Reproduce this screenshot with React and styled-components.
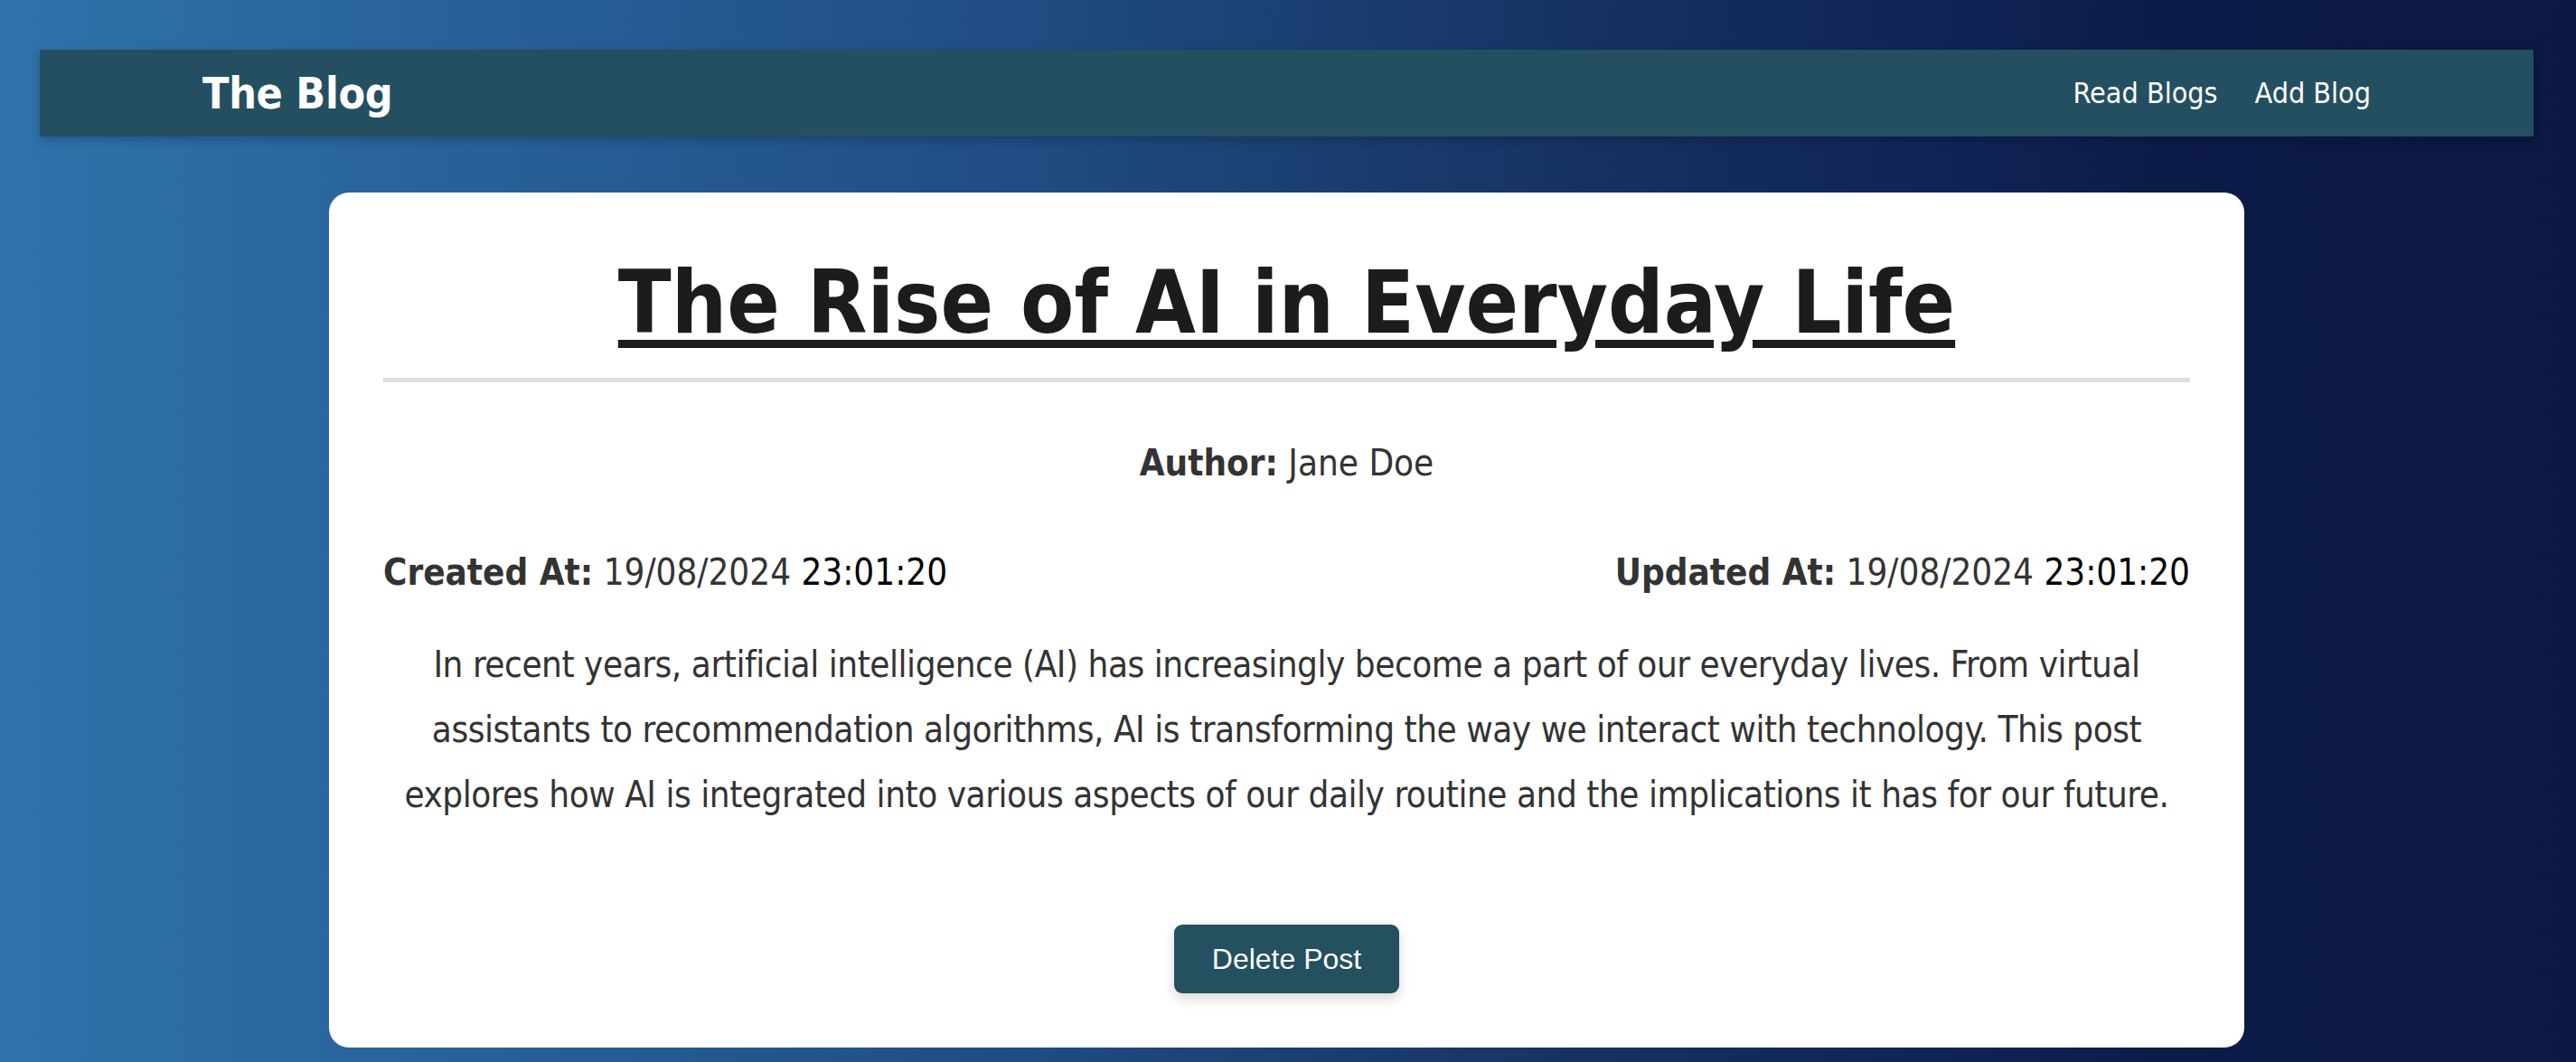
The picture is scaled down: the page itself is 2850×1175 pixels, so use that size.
import React from "react";
import styled, { createGlobalStyle } from "styled-components";

const GlobalStyle = createGlobalStyle`
    html, body {
        margin: 0;
        padding: 0;
    }
    body {
        font-family: "DejaVu Sans Condensed", "DejaVu Sans", Verdana, sans-serif;
        font-stretch: condensed;
        background: linear-gradient(to right, #2f72ac 0%, #1f4c82 40%, #16305f 63%, #0f2457 75%, #0c1b47 85%, #0b1842 100%);
        min-height: 100vh;
    }
`

const Page = styled.div `
    min-height: 1175px;
    padding: 55px 47px 0 44px;
    box-sizing: border-box;
`

const Navbar = styled.nav `
    display: flex;
    align-items: center;
    justify-content: space-between;
    height: 96px;
    padding: 0 180px;
    background-color: #244f61;
    box-shadow: 0 4px 10px rgba(0, 0, 0, 0.2);
`

const Brand = styled.h1 `
    margin: 0;
    color: white;
    font-size: 48px;
    font-weight: bold;
    letter-spacing: -0.3px;
`

const NavLinks = styled.div `
    display: flex;
    gap: 41px;
`

const NavLink = styled.a `
    color: white;
    font-size: 32px;
    text-decoration: none;
    cursor: pointer;
`

const Card = styled.article `
    width: 2119px;
    box-sizing: border-box;
    margin: 62px auto 0;
    padding: 60px;
    background: white;
    border-radius: 22px;
    display: flex;
    flex-direction: column;
    align-items: stretch;
`

const Titulo = styled.h2 `
    margin: 6px 0 0;
    text-align: center;
    font-size: 96px;
    font-weight: bold;
    color: #1c1c1c;
    text-decoration: underline;
    text-decoration-thickness: 9px;
    text-underline-offset: 8px;
`

const Linha = styled.hr `
    margin: 27px 0 0;
    border: none;
    height: 5px;
    background-color: #dedede;
`

const Autor = styled.p `
    margin: 66px 0 0;
    text-align: center;
    font-size: 40px;
    color: #333;
`

const Datas = styled.div `
    display: flex;
    justify-content: space-between;
    margin-top: 75px;
    font-size: 40px;
    color: #333;
`

const Hora = styled.span `
    color: #000;
`

const Conteudo = styled.p `
    margin: 43px 0 0;
    text-align: center;
    font-size: 40px;
    line-height: 72px;
    letter-spacing: -0.45px;
    color: #333;
`

const Botao = styled.button `
    align-self: center;
    margin-top: 108px;
    padding: 0 42px;
    height: 76px;
    font-family: "Liberation Sans", Arial, sans-serif;
    font-size: 32px;
    color: white;
    background-color: #24505f;
    border: none;
    border-radius: 9px;
    box-shadow: 0 6px 14px rgba(0, 0, 0, 0.16);
    cursor: pointer;
`

export default function App() {
    return (
        <Page>
            <GlobalStyle />
            <Navbar>
                <Brand>The Blog</Brand>
                <NavLinks>
                    <NavLink>Read Blogs</NavLink>
                    <NavLink>Add Blog</NavLink>
                </NavLinks>
            </Navbar>
            <Card>
                <Titulo>The Rise of AI in Everyday Life</Titulo>
                <Linha />
                <Autor><strong>Author:</strong> Jane Doe</Autor>
                <Datas>
                    <span><strong>Created At:</strong> 19/08/2024 <Hora>23:01:20</Hora></span>
                    <span><strong>Updated At:</strong> 19/08/2024 <Hora>23:01:20</Hora></span>
                </Datas>
                <Conteudo>
                    In recent years, artificial intelligence (AI) has increasingly become a part of our everyday lives. From virtual assistants to recommendation algorithms, AI is transforming the way we interact with technology. This post explores how AI is integrated into various aspects of our daily routine and the implications it has for our future.
                </Conteudo>
                <Botao>Delete Post</Botao>
            </Card>
        </Page>
    );
}
